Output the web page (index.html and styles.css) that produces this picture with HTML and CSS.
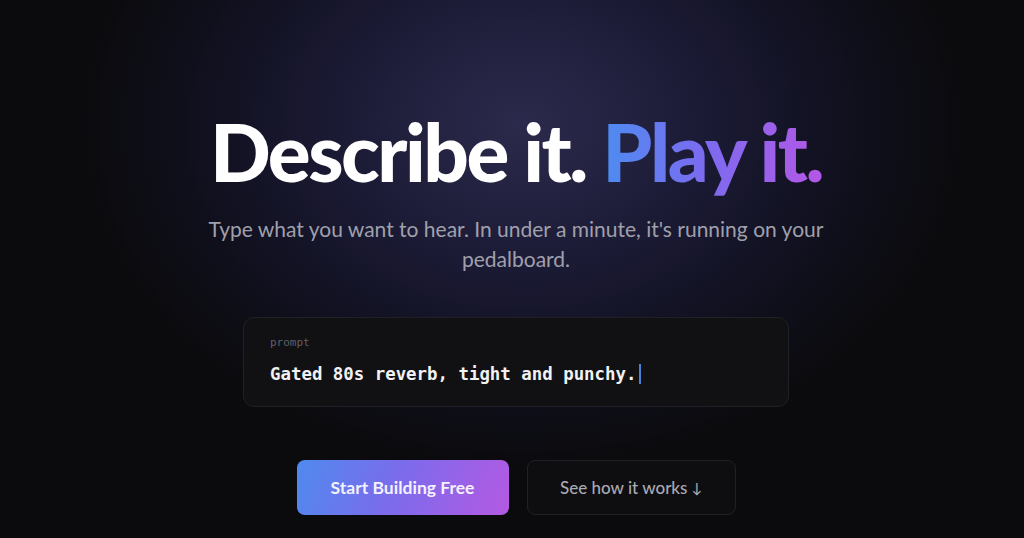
FILE: index.html
```html
<!DOCTYPE html>
<html lang="en">
<head>
<meta charset="utf-8">
<title>Describe it. Play it.</title>
<link rel="stylesheet" href="styles.css">
</head>
<body>
<main class="hero">
  <h1 class="title">Describe it. <span class="grad">Play it.</span></h1>
  <p class="sub">Type what you want to hear. In under a minute, it's running on your pedalboard.</p>
  <div class="prompt">
    <div class="label">prompt</div>
    <div class="text">Gated 80s reverb, tight and punchy.<span class="caret"></span></div>
  </div>
  <div class="actions">
    <a class="btn primary" href="#">Start Building Free</a>
    <a class="btn secondary" href="#">See how it works <span class="arrow">↓</span></a>
  </div>
</main>
</body>
</html>
```
FILE: styles.css
```css
* { box-sizing: border-box; }
html, body { margin: 0; height: 100%; }
body {
  background: #0b0b0e;
  background-image: radial-gradient(ellipse 440px 340px at 51% 23%, #2b2a4c 0%, #1c1b36 40%, #111121 70%, #0b0b0e 100%);
  font-family: Lato, "Noto Sans", sans-serif;
  color: #fff;
  overflow: hidden;
}
.hero {
  display: flex;
  flex-direction: column;
  align-items: center;
  padding-top: 103px;
  padding-left: 8px;
}
.title {
  margin: 0;
  font-size: 80px;
  font-weight: 900;
  letter-spacing: -2.5px;
  line-height: 96px;
  color: #fff;
}
.grad {
  background: linear-gradient(90deg, #4d8cf0 0%, #7a6cf0 45%, #b457e6 100%);
  -webkit-background-clip: text;
  background-clip: text;
  color: transparent;
}
.sub {
  margin: 15px 0 0;
  width: 660px;
  text-align: center;
  font-size: 21px;
  line-height: 30px;
  color: #a0a0ac;
}
.prompt {
  margin-top: 43px;
  width: 546px;
  height: 90px;
  border: 1px solid #202026;
  border-radius: 11px;
  background: #111114;
  padding: 18px 26px 0;
}
.label {
  font-family: "DejaVu Sans Mono", monospace;
  font-size: 11px;
  color: #5f5f68;
  line-height: 14px;
}
.text {
  margin-top: 13px;
  font-family: "DejaVu Sans Mono", monospace;
  font-weight: bold;
  font-size: 17.4px;
  line-height: 22px;
  color: #f2f2f4;
  display: flex;
  align-items: center;
}
.caret {
  display: inline-block;
  width: 2px;
  height: 20px;
  margin-left: 3px;
  background: #4d7fd6;
}
.actions {
  margin-top: 53px;
  display: flex;
  gap: 18px;
}
.btn {
  display: flex;
  align-items: center;
  justify-content: center;
  height: 55px;
  border-radius: 8px;
  font-size: 17px;
  text-decoration: none;
}
.primary {
  width: 212px;
  background: linear-gradient(110deg, #4f8aee 0%, #7a6cec 45%, #b459e2 100%);
  color: #f4f1ff;
  font-weight: 700;
  font-size: 17.5px;
}
.secondary {
  width: 209px;
  background: #0e0e11;
  border: 1px solid #202026;
  color: #a9a9b2;
  font-weight: 500;
}
.arrow {
  font-size: 14px;
  margin-left: 4px;
}
```
